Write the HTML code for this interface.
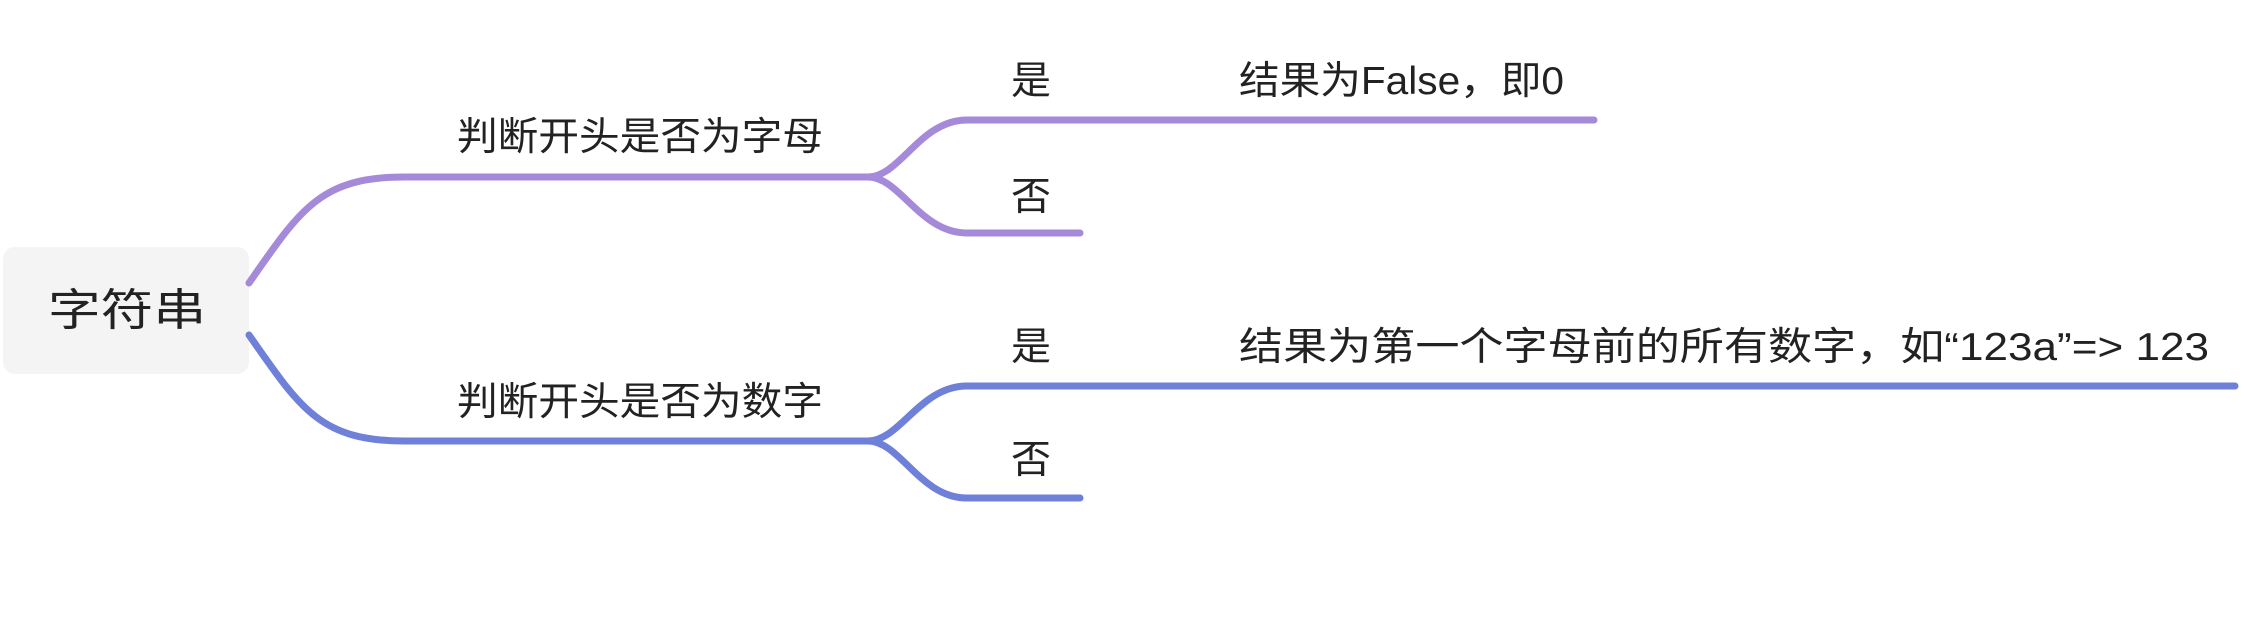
<!DOCTYPE html>
<html><head><meta charset="utf-8"><style>
html,body{margin:0;padding:0;background:#fff;}
svg{display:block}
text{font-family:"Liberation Sans","Noto Sans CJK SC",sans-serif;fill:#222;}
</style></head><body>
<svg width="2264" height="618" viewBox="0 0 2264 618" xmlns="http://www.w3.org/2000/svg">
<rect x="3" y="247" width="246" height="127" rx="12" fill="#f4f4f4"/>
<text x="48" y="325" font-size="44" textLength="158" lengthAdjust="spacingAndGlyphs">字符串</text>
<g fill="none" stroke-width="7" stroke-linecap="round">
<path d="M249,283 C300,210 320,177 404,177 L868,177" stroke="#a48ad9"/>
<path d="M868,177 C900,177 920,120 967,120 L1594,120" stroke="#a48ad9"/>
<path d="M868,177 C900,177 920,233 967,233 L1080,233" stroke="#a48ad9"/>
<path d="M249,335 C300,408 320,441 404,441 L868,441" stroke="#6f80d9"/>
<path d="M868,441 C900,441 920,386 967,386 L2235,386" stroke="#6f80d9"/>
<path d="M868,441 C900,441 920,498 967,498 L1080,498" stroke="#6f80d9"/>
</g>
<text x="457" y="150" font-size="39" textLength="366" lengthAdjust="spacingAndGlyphs">判断开头是否为字母</text>
<text x="457" y="415" font-size="39" textLength="366" lengthAdjust="spacingAndGlyphs">判断开头是否为数字</text>
<text x="1011" y="94" font-size="39" textLength="40" lengthAdjust="spacingAndGlyphs">是</text>
<text x="1011" y="210" font-size="39" textLength="40" lengthAdjust="spacingAndGlyphs">否</text>
<text x="1011" y="360" font-size="39" textLength="40" lengthAdjust="spacingAndGlyphs">是</text>
<text x="1011" y="473" font-size="39" textLength="40" lengthAdjust="spacingAndGlyphs">否</text>
<text x="1239" y="94" font-size="39" textLength="325" lengthAdjust="spacingAndGlyphs">结果为False，即0</text>
<text x="1239" y="360" font-size="39" textLength="970" lengthAdjust="spacingAndGlyphs">结果为第一个字母前的所有数字，如“123a”=&gt; 123</text>
</svg>
</body></html>
